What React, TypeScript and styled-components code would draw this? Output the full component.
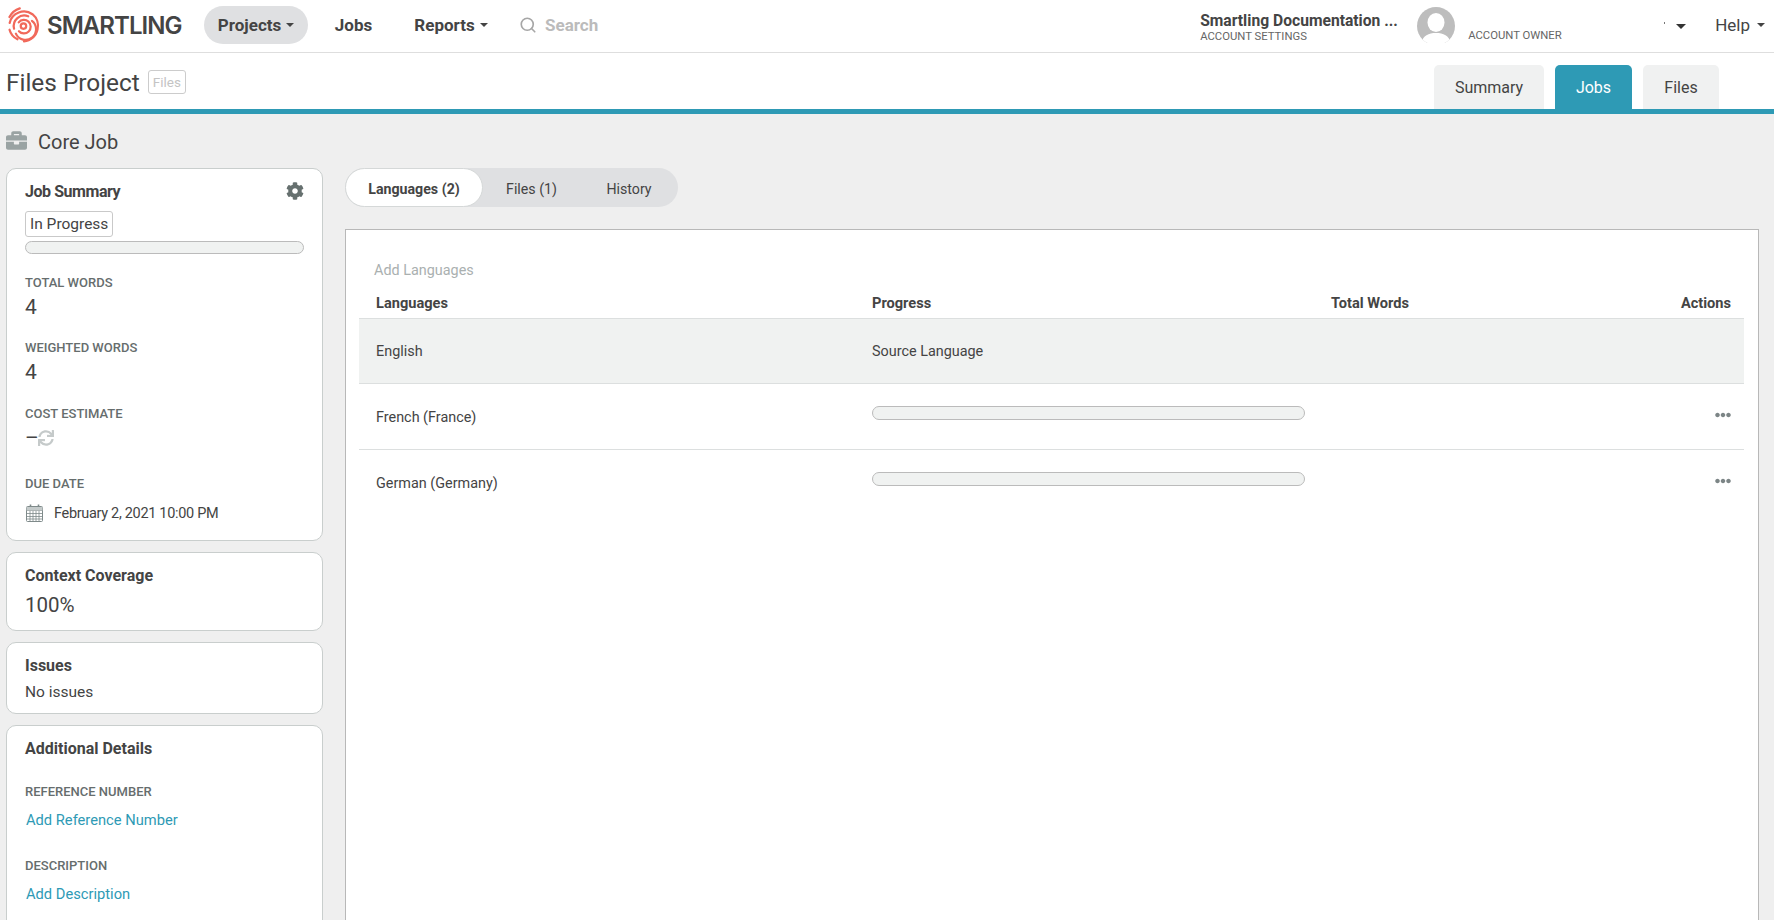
import React from "react";
import styled, { createGlobalStyle } from "styled-components";
import { FaBriefcase, FaCog, FaSync, FaEllipsisH } from "react-icons/fa";
import { Search } from "lucide-react";

const Global = createGlobalStyle`
  html, body { margin: 0; padding: 0; background: #efefef; height: 100%; overflow: hidden; }
  body { font-family: Roboto, "Liberation Sans", sans-serif; color: #444; }
  * { box-sizing: border-box; }
`;

const Page = styled.div`
  width: 1774px;
  height: 920px;
  overflow: hidden;
  background: #efefef;
`;

const Navbar = styled.header`
  height: 53px;
  background: #fff;
  border-bottom: 1.5px solid #dedede;
  display: flex;
  align-items: center;
  padding-left: 6px;
  padding-bottom: 2px;
`;

const Logo = styled.div`
  display: flex;
  align-items: center;
  width: 198px;
  gap: 5px;
  flex: none;
`;

const LogoText = styled.span`
  font-family: Inter, sans-serif;
  font-size: 24px;
  font-weight: 600;
  letter-spacing: -0.95px;
  color: #444;
`;

const NavItem = styled.a<{ $active?: boolean; $w: number; $ml?: number }>`
  width: ${(p) => p.$w}px;
  margin-left: ${(p) => p.$ml ?? 0}px;
  height: 38px;
  border-radius: 19px;
  background: ${(p) => (p.$active ? "#dfe0e2" : "transparent")};
  display: flex;
  align-items: center;
  justify-content: center;
  gap: 5px;
  font-size: 17px;
  font-weight: 700;
  color: #444;
  flex: none;
`;

const Caret = styled.span<{ $w?: number; $c?: string }>`
  display: inline-block;
  width: 0;
  height: 0;
  border-left: ${(p) => p.$w ?? 4}px solid transparent;
  border-right: ${(p) => p.$w ?? 4}px solid transparent;
  border-top: ${(p) => p.$w ?? 4}px solid ${(p) => p.$c ?? "#444"};
  flex: none;
`;

const SearchBox = styled.div`
  margin-left: 30px;
  display: flex;
  align-items: center;
  gap: 8px;
  font-size: 17px;
  font-weight: 700;
  color: #bbb;
`;

const NavRight = styled.div`
  margin-left: auto;
  display: flex;
  align-items: center;
  height: 53px;
  margin-top: 2px;
`;

const Account = styled.div`
  width: 217px;
  display: flex;
  flex-direction: column;
  padding-top: 2px;
`;

const AccountName = styled.div`
  font-size: 15.65px;
  font-weight: 700;
  line-height: 18px;
  color: #444;
  white-space: nowrap;
`;

const Small = styled.div`
  font-size: 11.3px;
  line-height: 13px;
  color: #666;
  white-space: nowrap;
`;

const AvatarWrap = styled.div`
  width: 38px;
  height: 36px;
  align-self: flex-start;
  margin-top: 7px;
  flex: none;
`;

const OwnerCol = styled.div`
  width: 178px;
  margin-left: 13px;
  padding-top: 29px;
  align-self: flex-start;
`;

const UserCaret = styled.div`
  width: 40px;
  display: flex;
  align-items: center;
  justify-content: flex-end;
  gap: 11px;
  padding-top: 1px;
`;

const TinyDot = styled.span`
  width: 1.5px;
  height: 1.5px;
  background: #777;
  margin-top: -7px;
`;

const Help = styled.div`
  margin-left: 29px;
  margin-right: 9px;
  margin-top: -2px;
  display: flex;
  align-items: center;
  gap: 7px;
  font-size: 17px;
  color: #444;
`;

const SubHeader = styled.div`
  height: 61px;
  background: #fff;
  border-bottom: 5px solid #2e9ab5;
  display: flex;
  align-items: flex-end;
  padding-left: 6px;
`;

const ProjectTitle = styled.div`
  align-self: center;
  margin-top: 2px;
  display: flex;
  align-items: center;
  gap: 8px;
  font-size: 24.4px;
  color: #444;
`;

const Badge = styled.span`
  border: 1px solid #ccc;
  border-radius: 3px;
  font-size: 13.5px;
  color: #c4c4c4;
  height: 24px;
  padding: 0 4px;
  display: inline-flex;
  align-items: center;
`;

const TabBar = styled.nav`
  margin-left: auto;
  margin-right: 55px;
  display: flex;
  gap: 11px;
`;

const Tab = styled.div<{ $active?: boolean; $w: number }>`
  width: ${(p) => p.$w}px;
  height: 44px;
  border-radius: 5px 5px 0 0;
  background: ${(p) => (p.$active ? "#2e9ab5" : "#f0f1f1")};
  color: ${(p) => (p.$active ? "#fff" : "#444")};
  font-size: 16px;
  display: flex;
  align-items: center;
  justify-content: center;
`;

const JobTitle = styled.div`
  height: 54px;
  padding-left: 6px;
  padding-top: 2px;
  display: flex;
  align-items: center;
  gap: 11px;
  font-size: 20px;
  color: #444;
  svg { color: #9aa3a3; margin-top: -3px; }
`;

const Columns = styled.div`
  display: flex;
  gap: 22px;
  padding: 0 15px 0 6px;
  align-items: flex-start;
`;

const Sidebar = styled.aside`
  width: 317px;
  flex: none;
  display: flex;
  flex-direction: column;
  gap: 11px;
`;

const Card = styled.section`
  background: #fff;
  border: 1px solid #c9cecd;
  border-radius: 10px;
  padding: 13px 18px 0;
`;

const TallCard = styled(Card)`
  padding-bottom: 60px;
`;

const CardTitle = styled.h3<{ $tight?: boolean }>`
  margin: 0;
  font-size: 16px;
  line-height: 20px;
  font-weight: 700;
  color: #444;
  display: flex;
  justify-content: space-between;
  align-items: center;
  letter-spacing: ${(p) => (p.$tight ? "-0.45px" : "0")};
  svg { color: #66706f; margin-top: -2px; }
`;

const Status = styled.span`
  display: inline-flex;
  align-items: center;
  margin-top: 9px;
  height: 26px;
  padding: 0 4px;
  border: 1px solid #c9c9c9;
  border-radius: 3px;
  font-size: 15.5px;
  color: #444;
`;

const Bar = styled.div<{ $top?: number; $w?: number; $h?: number }>`
  margin-top: ${(p) => p.$top ?? 0}px;
  ${(p) => (p.$w ? `width: ${p.$w}px;` : "")}
  height: ${(p) => p.$h ?? 14}px;
  border: 1px solid #bbb;
  border-radius: 7px;
  background: #f0f2f1;
`;

const Label = styled.div<{ $top: number }>`
  margin-top: ${(p) => p.$top}px;
  font-size: 13px;
  line-height: 16px;
  font-weight: 500;
  color: #666d6d;
`;

const Value = styled.div<{ $top?: number }>`
  margin-top: ${(p) => p.$top ?? 4}px;
  font-size: 21px;
  line-height: 24px;
  color: #444;
  display: flex;
  align-items: center;
  svg { color: #c5caca; margin-left: -1px; }
`;

const DateRow = styled.div`
  margin-top: 12px;
  padding-left: 1px;
  display: flex;
  align-items: center;
  gap: 11px;
  font-size: 14.5px;
  letter-spacing: -0.32px;
  line-height: 20px;
  color: #444;
  padding-bottom: 16px;
  svg { margin-top: -3px; }
`;

const Plain = styled.div`
  margin-top: 6px;
  font-size: 15.5px;
  line-height: 20px;
  color: #444;
  padding-bottom: 11px;
`;

const Percent = styled.div`
  margin-top: 6px;
  font-size: 20.5px;
  line-height: 26px;
  color: #444;
  padding-bottom: 12px;
`;

const LinkText = styled.a`
  display: block;
  margin-top: 10px;
  padding-left: 1px;
  font-size: 14.7px;
  line-height: 20px;
  color: #2e9ab5;
`;

const Main = styled.main`
  flex: 1;
  min-width: 0;
`;

const Segments = styled.div`
  width: 333px;
  height: 39px;
  border-radius: 20px;
  background: #dfe0e2;
  display: flex;
  align-items: center;
`;

const Segment = styled.div<{ $active?: boolean; $w: number }>`
  width: ${(p) => p.$w}px;
  height: 39px;
  border-radius: 20px;
  padding-top: 3px;
  background: ${(p) => (p.$active ? "#fff" : "transparent")};
  border: ${(p) => (p.$active ? "1px solid #d5d8d8" : "none")};
  font-weight: ${(p) => (p.$active ? 700 : 400)};
  font-size: 14.2px;
  color: #444;
  display: flex;
  align-items: center;
  justify-content: center;
  flex: none;
`;

const Panel = styled.div`
  margin-top: 22px;
  height: 800px;
  background: #fff;
  border: 1px solid #b8b8b8;
  padding: 31px 14px 0 13px;
`;

const AddLanguages = styled.div`
  padding-left: 15px;
  font-size: 14.4px;
  line-height: 20px;
  color: #aab0b0;
`;

const Row = styled.div<{ $head?: boolean; $source?: boolean; $last?: boolean }>`
  display: grid;
  grid-template-columns: 496px 459px 1fr auto;
  padding: ${(p) => (p.$head ? "0 13px 5px 17px" : "2px 13px 0 17px")};
  height: ${(p) => (p.$head ? 38 : p.$source ? 65 : 66)}px;
  align-items: ${(p) => (p.$head ? "end" : "center")};
  background: ${(p) => (p.$source ? "#f0f2f1" : "transparent")};
  border-bottom: ${(p) => (p.$last ? "none" : "1px solid #dcdfdf")};
  font-size: ${(p) => (p.$head ? 14.6 : 14.4)}px;
  line-height: 20px;
  font-weight: ${(p) => (p.$head ? 700 : 400)};
  color: #444;
`;

const BarCell = styled.div`
  align-self: start;
  padding-top: 20px;
`;

const Dots = styled.div`
  color: #7c8586;
  display: flex;
  margin-top: -6px;
`;

const Fingerprint = () => (
  <svg width="36" height="38" viewBox="0 0 34 36" fill="none" stroke="#f1695b" strokeWidth="2.1" strokeLinecap="round">
    <circle cx="16.5" cy="19" r="2.6" />
    <path d="M12 15.5a6.4 6.4 0 1 1 .2 8.4" />
    <path d="M24.5 14.2a10 10 0 1 1-15.2 12" />
    <path d="M7.6 21.5A10 10 0 0 1 21 9.8" />
    <path d="M3.4 16A14 14 0 0 1 25 7.8a14 14 0 0 1 4.8 14.6A14 14 0 0 1 17 33.5" />
    <path d="M3.3 22.5a14 14 0 0 0 7.5 9" />
    <path d="M3.2 10.5A17 17 0 0 1 13 2.3" />
  </svg>
);

const Avatar = () => (
  <svg width="38" height="36" viewBox="0 0 38 36">
    <defs>
      <clipPath id="avatar-clip">
        <circle cx="19" cy="19" r="19" />
      </clipPath>
    </defs>
    <g clipPath="url(#avatar-clip)">
      <rect width="38" height="38" fill="#bdbdbd" />
      <ellipse cx="19" cy="15.5" rx="8.5" ry="9.5" fill="#fff" />
      <path d="M4 38c1-9 7-12 15-12s14 3 15 12z" fill="#fff" />
    </g>
  </svg>
);

const CalendarIcon = () => (
  <svg width="17" height="18" viewBox="0 0 17 18" fill="none" stroke="#7f8a8a" strokeWidth="1">
    <rect x="0.5" y="2.5" width="16" height="15" rx="1" />
    <path d="M0.5 6.5h16M0.5 9.5h16M0.5 12.5h16M0.5 15h16M4 6.5v11M7 6.5v11M10 6.5v11M13 6.5v11" strokeWidth="0.8" />
    <path d="M4.5 0.5v3.5M12.5 0.5v3.5" strokeWidth="1.6" />
    <path d="M0.5 3h16v3.5h-16z" fill="#c5cbcb" stroke="none" />
  </svg>
);

export default function App() {
  return (
    <Page>
      <Global />
      <Navbar>
        <Logo>
          <Fingerprint />
          <LogoText>SMARTLING</LogoText>
        </Logo>
        <NavItem $active $w={104}>Projects <Caret /></NavItem>
        <NavItem $w={37} $ml={27}>Jobs</NavItem>
        <NavItem $w={76} $ml={41}>Reports <Caret /></NavItem>
        <SearchBox>
          <Search size={18} strokeWidth={2.2} color="#a6a6a6" />
          Search
        </SearchBox>
        <NavRight>
          <Account>
            <AccountName>Smartling Documentation ...</AccountName>
            <Small>ACCOUNT SETTINGS</Small>
          </Account>
          <AvatarWrap><Avatar /></AvatarWrap>
          <OwnerCol><Small>ACCOUNT OWNER</Small></OwnerCol>
          <UserCaret><TinyDot /><Caret $w={5} $c="#333" /></UserCaret>
          <Help>Help <Caret /></Help>
        </NavRight>
      </Navbar>
      <SubHeader>
        <ProjectTitle>
          Files Project
          <Badge>Files</Badge>
        </ProjectTitle>
        <TabBar>
          <Tab $w={110}>Summary</Tab>
          <Tab $active $w={77}>Jobs</Tab>
          <Tab $w={76}>Files</Tab>
        </TabBar>
      </SubHeader>
      <JobTitle>
        <FaBriefcase size={21} />
        Core Job
      </JobTitle>
      <Columns>
        <Sidebar>
          <Card>
            <CardTitle $tight>
              Job Summary
              <FaCog size={18} />
            </CardTitle>
            <Status>In Progress</Status>
            <Bar $top={4} $h={13} />
            <Label $top={21}>TOTAL WORDS</Label>
            <Value>4</Value>
            <Label $top={21}>WEIGHTED WORDS</Label>
            <Value>4</Value>
            <Label $top={22}>COST ESTIMATE</Label>
            <Value>– <FaSync size={16} /></Value>
            <Label $top={26}>DUE DATE</Label>
            <DateRow>
              <CalendarIcon />
              February 2, 2021 10:00 PM
            </DateRow>
          </Card>
          <Card>
            <CardTitle>Context Coverage</CardTitle>
            <Percent>100%</Percent>
          </Card>
          <Card>
            <CardTitle>Issues</CardTitle>
            <Plain>No issues</Plain>
          </Card>
          <TallCard>
            <CardTitle>Additional Details</CardTitle>
            <Label $top={25}>REFERENCE NUMBER</Label>
            <LinkText>Add Reference Number</LinkText>
            <Label $top={28}>DESCRIPTION</Label>
            <LinkText>Add Description</LinkText>
          </TallCard>
        </Sidebar>
        <Main>
          <Segments>
            <Segment $active $w={138}>Languages (2)</Segment>
            <Segment $w={97}>Files (1)</Segment>
            <Segment $w={98}>History</Segment>
          </Segments>
          <Panel>
            <AddLanguages>Add Languages</AddLanguages>
            <Row $head>
              <span>Languages</span>
              <span>Progress</span>
              <span>Total Words</span>
              <span>Actions</span>
            </Row>
            <Row $source>
              <span>English</span>
              <span>Source Language</span>
            </Row>
            <Row>
              <span>French (France)</span>
              <BarCell><Bar $w={433} /></BarCell>
              <span />
              <Dots><FaEllipsisH size={16} /></Dots>
            </Row>
            <Row $last>
              <span>German (Germany)</span>
              <BarCell><Bar $w={433} /></BarCell>
              <span />
              <Dots><FaEllipsisH size={16} /></Dots>
            </Row>
          </Panel>
        </Main>
      </Columns>
    </Page>
  );
}
